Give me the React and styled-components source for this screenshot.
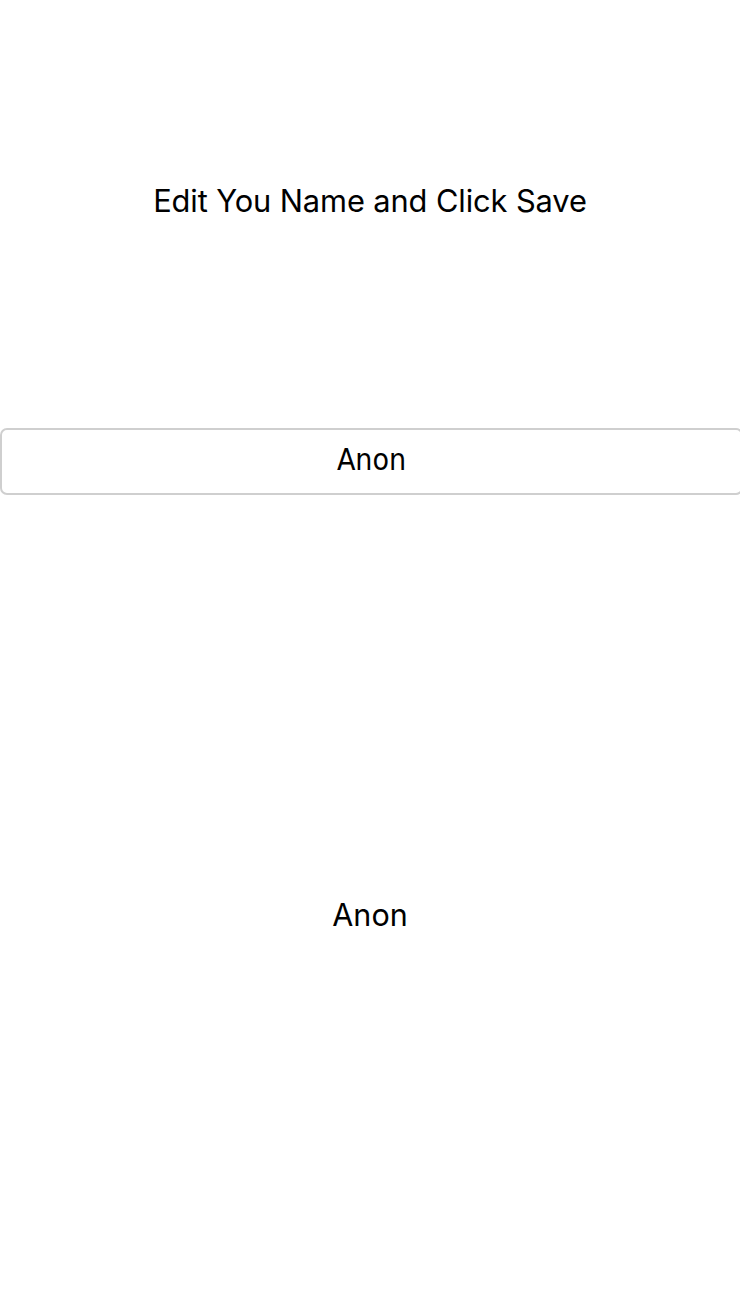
import React, { useState } from 'react';
import styled, { createGlobalStyle } from 'styled-components';

const GlobalStyle = createGlobalStyle`
  html, body {
    margin: 0;
    padding: 0;
    background: #ffffff;
  }
  body {
    font-family: Inter, "Liberation Sans", sans-serif;
    overflow-x: hidden;
  }
`;

const Screen = styled.div`
  display: flex;
  flex-direction: column;
  align-items: center;
  height: 1308px;
  color: #000;
`;

const Title = styled.div`
  margin-top: 183px;
  font-size: 30.8px;
  line-height: 36px;
  letter-spacing: -0.1px;
`;

const NameInput = styled.input`
  box-sizing: border-box;
  margin-top: 209px;
  align-self: flex-start;
  width: calc(100% + 3px);
  height: 67px;
  border: 2px solid #cfcfcf;
  border-radius: 7px;
  background: #fff;
  text-align: center;
  font-family: "DejaVu Sans", sans-serif;
  font-stretch: condensed;
  font-size: 30px;
  padding: 0 0 4px;
  color: #000;
  outline: none;
`;

const SavedName = styled.div`
  margin-top: 402px;
  font-size: 30.5px;
  line-height: 36px;
`;

const App = () => {
  const [name, setName] = useState('Anon');

  return (
    <>
      <GlobalStyle />
      <Screen>
        <Title>Edit You Name and Click Save</Title>
        <NameInput value={name} onChange={(e) => setName(e.target.value)} />
        <SavedName>{name}</SavedName>
      </Screen>
    </>
  );
};

export default App;
